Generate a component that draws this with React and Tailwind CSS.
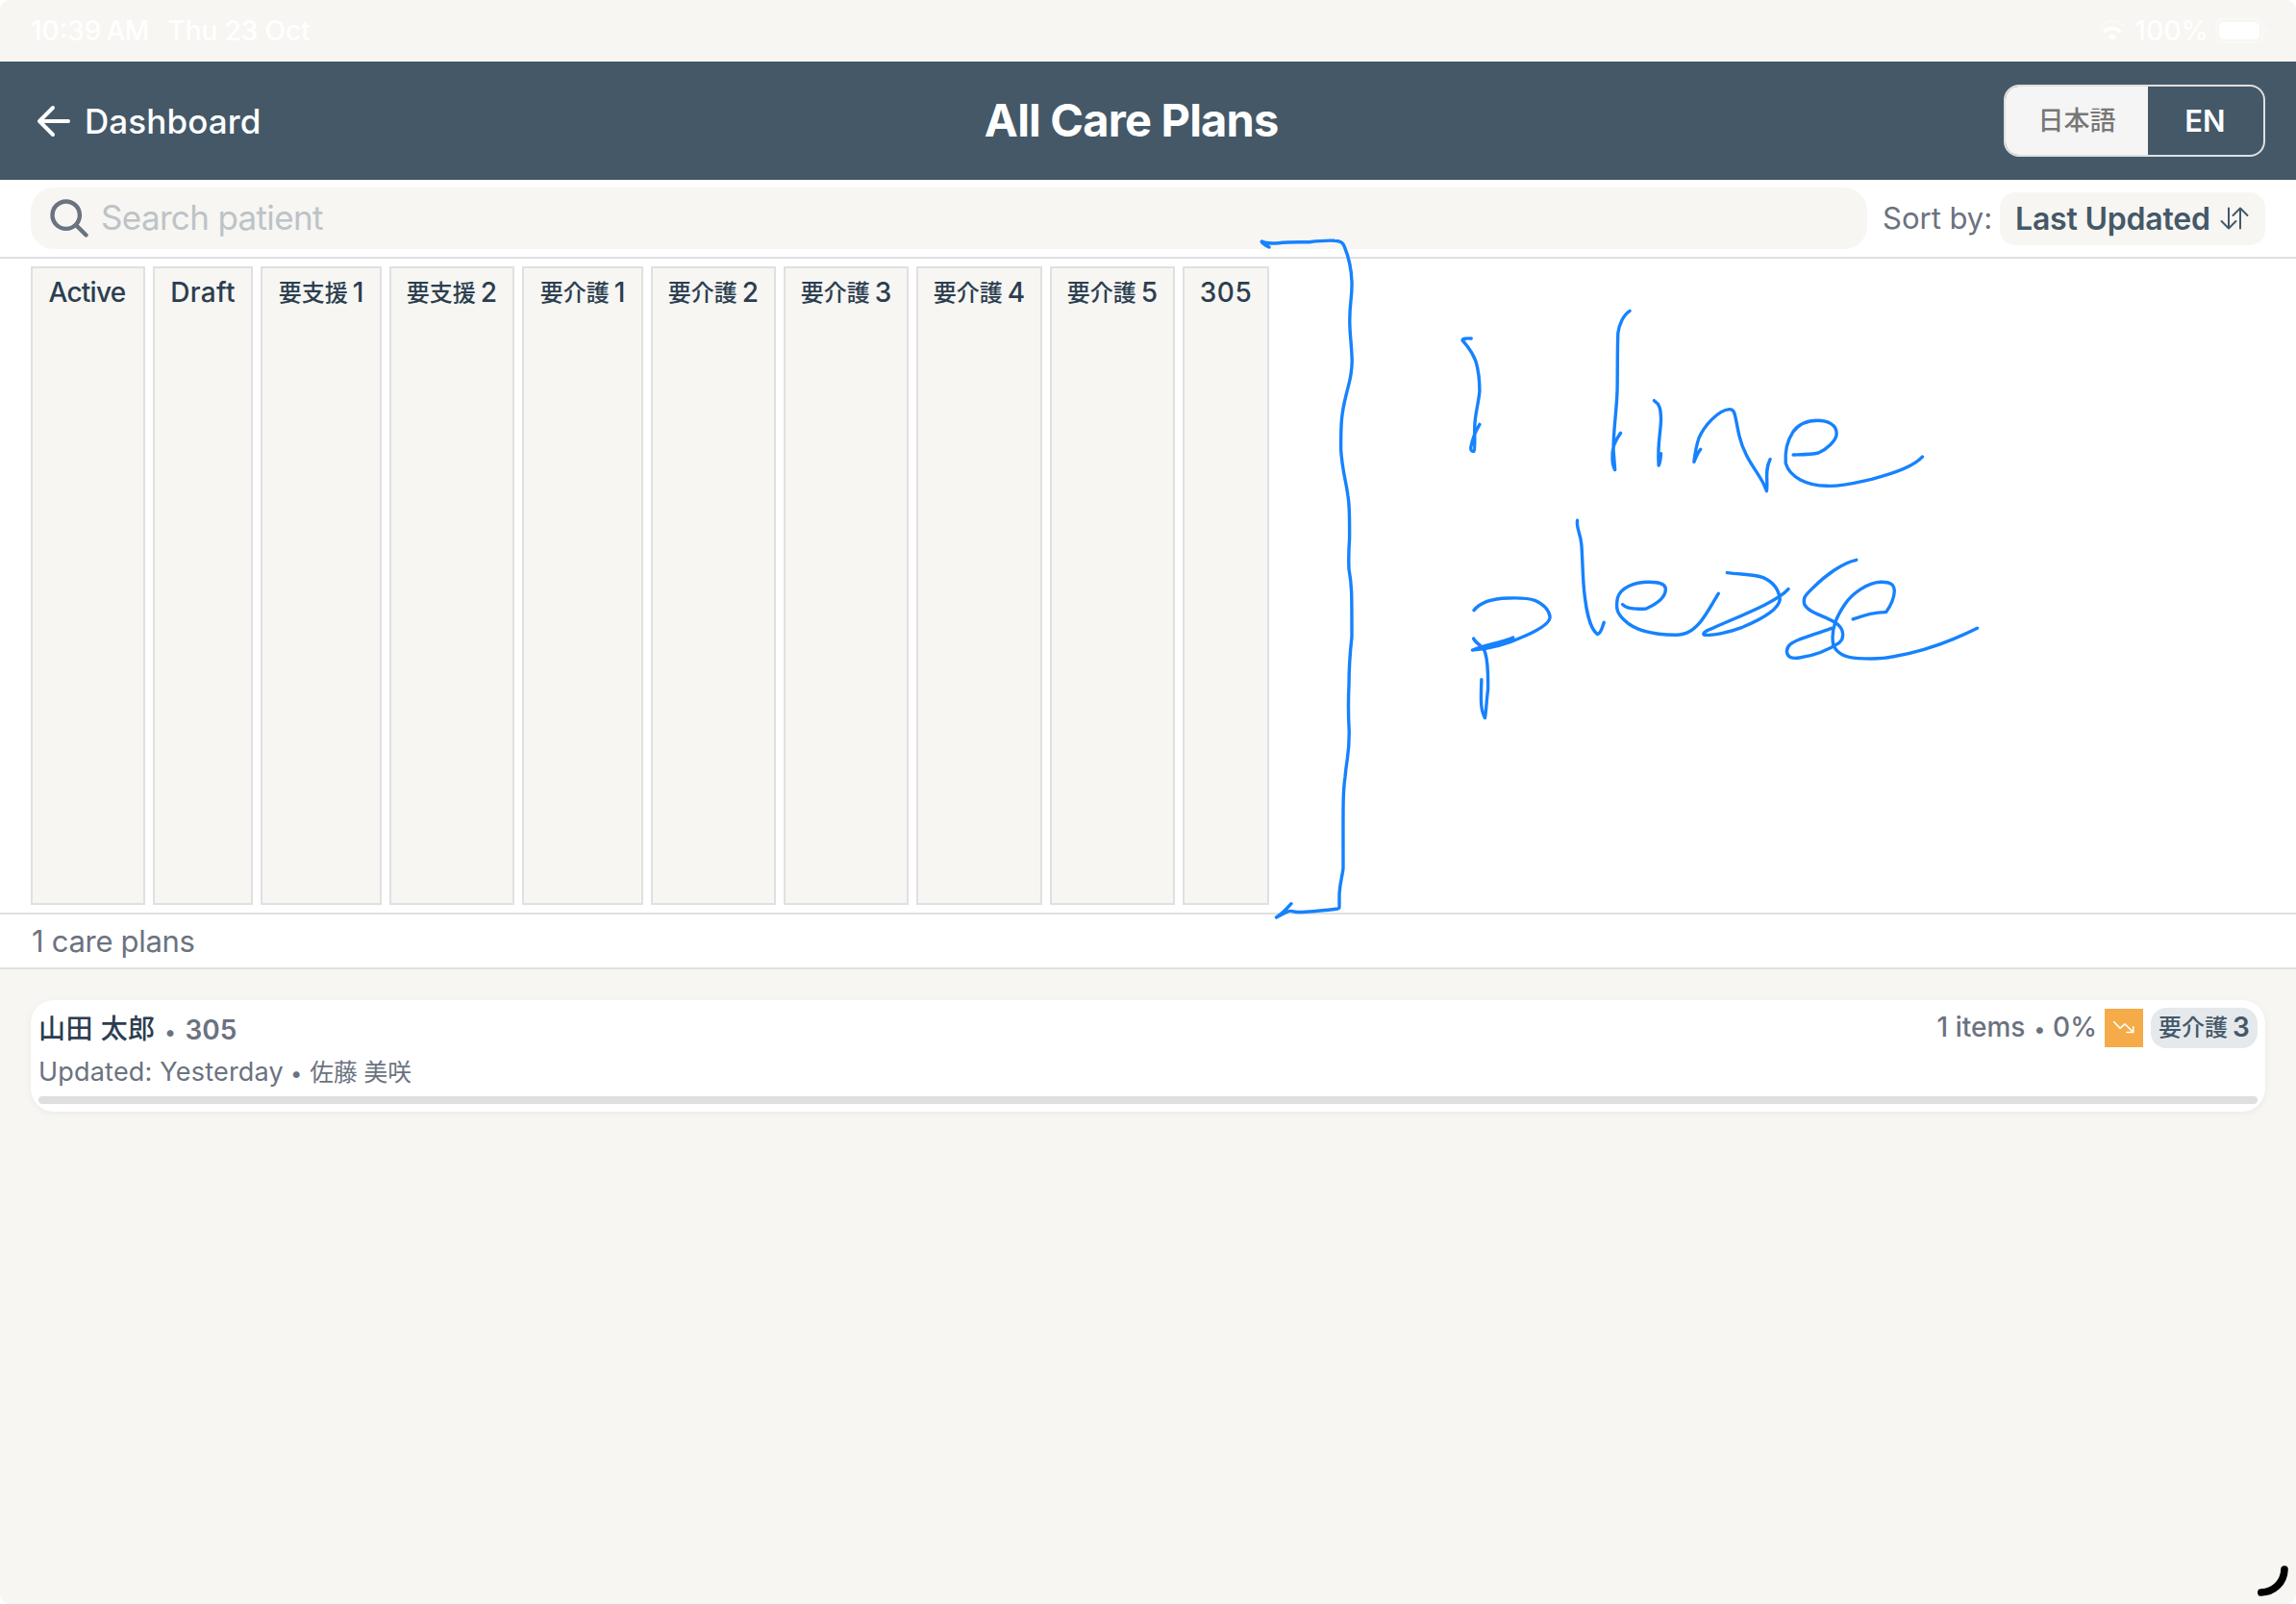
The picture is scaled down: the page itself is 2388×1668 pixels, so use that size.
const filters = [
  { label: "Active", className: "w-[119px]", text: "-ml-[2px] tracking-[-0.75px]" },
  { label: "Draft", className: "w-[104px]", text: "tracking-[0.35px]" },
  { level: "要支援", digit: "1", className: "w-[126px]" },
  { level: "要支援", digit: "2", className: "w-[130px]" },
  { level: "要介護", digit: "1", className: "w-[126px]" },
  { level: "要介護", digit: "2", className: "w-[130px]" },
  { level: "要介護", digit: "3", className: "w-[130px]" },
  { level: "要介護", digit: "4", className: "w-[131px]" },
  { level: "要介護", digit: "5", className: "w-[130px]" },
  { label: "305", className: "w-[90px]", text: "tracking-[0.5px]" },
];

function CareLevel({ level, digit }) {
  return (
    <span className="inline-flex items-baseline whitespace-nowrap">
      <span className="relative -top-px text-[24px] font-medium">{level}</span>
      <span className="ml-[5px]">{digit}</span>
    </span>
  );
}

function StatusBar() {
  return (
    <div className="flex h-16 shrink-0 items-center justify-between bg-[#f7f6f2] pr-[29px] pl-8 text-[28px] leading-8 font-medium text-white">
      <div className="flex">
        <span>10:39</span>
        <span className="ml-[5px] tracking-[-0.6px]">AM</span>
        <span className="ml-[20px] tracking-[-0.1px]">Thu 23 Oct</span>
      </div>
      <div className="flex items-center">
        <svg className="h-[22px] w-7" viewBox="0 0 28 22" fill="none">
          <path d="M1 6.5C8.500-.5 19.500-.5 27 6.500" stroke="white" strokeOpacity="0.35" strokeWidth="3" />
          <path d="M5.500 12C10.500 7.200 17.500 7.200 22.500 12" stroke="white" strokeWidth="3.600" />
          <path d="M14 21l-4.300-4.300c2.500-2.200 6.100-2.200 8.600 0z" fill="white" />
        </svg>
        <span className="ml-[9px] tracking-[0.3px]">100%</span>
        <svg className="ml-[7px] h-[26px] w-[55px]" viewBox="0 0 55 26" fill="none">
          <rect x="1" y="1" width="48" height="24" rx="7.500" stroke="white" strokeOpacity="0.4" strokeWidth="2" />
          <rect x="4" y="4" width="42" height="18" rx="5" fill="white" />
          <path d="M52 9c3 1 3 7 0 8z" fill="white" fillOpacity="0.45" />
        </svg>
      </div>
    </div>
  );
}

function Header() {
  return (
    <header className="flex h-[123px] shrink-0 items-center justify-between bg-[#445868] pr-8 pl-[38px] text-white">
      <div className="flex items-center">
        <svg className="h-[34px] w-9" viewBox="0 0 36 34" fill="none" stroke="white" strokeWidth="4" strokeLinecap="round" strokeLinejoin="round">
          <path d="M17 3L3 17l14 14M4 17h29" />
        </svg>
        <span className="ml-[14px] text-[35px] leading-10 font-medium tracking-[0.1px]">Dashboard</span>
      </div>
      <h1 className="-mt-px mr-[2px] text-[47px] leading-[56px] font-bold tracking-[-0.8px]">All Care Plans</h1>
      <div className="flex h-[75px] w-[272px] overflow-hidden rounded-[16px] border-2 border-[#e0e0e0] text-[31px] leading-[71px] font-semibold">
        <div className="w-[148px] bg-[#f5f5f5] text-center text-[27px] font-medium text-[#777777]">日本語</div>
        <div className="flex-1 pr-px text-center">EN</div>
      </div>
    </header>
  );
}

function Toolbar() {
  return (
    <div className="flex h-[82px] shrink-0 items-center border-b-2 border-[#e0e0e0] bg-white px-8">
      <div className="flex h-16 w-[1910px] items-center rounded-[24px] bg-[#f7f6f2] pl-5">
        <svg className="h-10 w-10" viewBox="0 0 40 40" fill="none" stroke="#6b7280" strokeLinecap="round">
          <circle cx="16.700" cy="16.700" r="14.200" strokeWidth="4.400" />
          <path d="M27.500 27.500L37.500 37.500" strokeWidth="4.400" />
        </svg>
        <span className="-mt-[2px] ml-[13px] text-[35px] leading-10 tracking-[-0.65px] text-[#bdc3c7]">Search patient</span>
      </div>
      <span className="ml-4 text-[31px] leading-9 text-[#6b7280]">Sort by:</span>
      <div className="ml-auto flex h-[55px] w-[276px] items-center rounded-[16px] bg-[#f7f6f2] pl-4 text-[#445868]">
        <span className="mt-px text-[32px] leading-9 font-semibold tracking-[-0.2px]">Last Updated</span>
        <svg className="ml-[9px] h-7 w-8" viewBox="0 0 32 28" fill="none" stroke="#445868" strokeWidth="2" strokeLinecap="round" strokeLinejoin="round">
          <path d="M10 3.500v21M2.500 17l7.500 7.500 7.500-7.500M22 24.500v-21M14.500 11L22 3.500l7.500 7.500" />
        </svg>
      </div>
    </div>
  );
}

function FilterColumns() {
  return (
    <div className="flex h-[682px] shrink-0 gap-2 border-b-2 border-[#e0e0e0] bg-white px-8 py-2">
      {filters.map((f, i) => (
        <div key={i} className={`shrink-0 border-2 border-[#e0e0e0] bg-[#f7f6f2] pt-[9px] text-center text-[28px] leading-8 font-medium text-[#2c3e50] ${f.className}`}>
          {f.label ? <span className={f.text}>{f.label}</span> : <CareLevel level={f.level} digit={f.digit} />}
        </div>
      ))}
    </div>
  );
}

function PlanCard() {
  return (
    <article className="mx-8 mt-8 h-[116px] shrink-0 rounded-[24px] bg-white px-2 pt-2 shadow-[0_2px_8px_rgba(0,0,0,0.05)]">
      <div className="flex h-[92px] justify-between text-[#6b7280]">
        <div className="pt-[6px]">
          <div className="flex h-[34px] items-baseline text-[28px] leading-[34px] font-semibold whitespace-pre">
            <span className="relative -top-px font-medium tracking-[0.4px] text-[#2c3e50]">山田 太郎</span>
            <span className="ml-[10px] text-[22px]">•</span>
            <span className="ml-[10px]">305</span>
          </div>
          <div className="mt-[10px] flex h-8 items-baseline text-[27px] leading-[34px] whitespace-pre">
            <span className="tracking-[0.2px]">Updated: Yesterday</span>
            <span className="ml-[7px] text-[22px]">•</span>
            <span className="ml-[8px] text-[24.700px]">佐藤 美咲</span>
          </div>
        </div>
        <div className="flex h-[42px] items-center text-[28px] leading-8 font-medium">
          <span className="flex items-baseline">
            <span>1 items</span>
            <span className="ml-[9px] text-[22px]">•</span>
            <span className="ml-[8px]">0%</span>
          </span>
          <span className="ml-2 flex size-10 items-center justify-center bg-[#f4ab48]">
            <svg className="size-6" viewBox="0 0 24 24" fill="none" stroke="white" strokeWidth="1.600" strokeLinecap="round" strokeLinejoin="round">
              <path d="M1.500 5.500L8 12.300l5-4.500 8.500 8.500M21.700 10.800v5.700H15" />
            </svg>
          </span>
          <span className="ml-2 flex h-[42px] w-[111px] items-center justify-center rounded-[16px] bg-[#e5e9ec] font-semibold text-[#445868]">
            <CareLevel level="要介護" digit="3" />
          </span>
        </div>
      </div>
      <div className="h-2 rounded-[4px] bg-[#dfdfdf]" />
    </article>
  );
}

function Annotations() {
  return (
    <div className="pointer-events-none absolute inset-0 text-[#1682fe]">
      <svg className="size-full" viewBox="0 0 2388 1668" fill="none" stroke="currentColor" strokeWidth="3.400" strokeLinecap="round" strokeLinejoin="round">
        <path d="M1320 257C1315 255 1311 251 1312.500 251C1314 252 1320 253.500 1330 252.700C1342 251.500 1350 252 1361.600 251.700C1372 250.500 1380 249.800 1388 250.300C1395 250.500 1397 253 1398.500 257C1403 268 1405.500 280 1406 293C1406.500 310 1403.500 315 1403.800 335C1404 350 1406 360 1406.200 376C1406 392 1403 398 1400 411C1395 431 1394.600 440 1394.600 467C1396 490 1400 500 1402 516C1404 528 1403.600 540 1403.600 560C1402.500 575 1402.500 580 1403 592C1406 608 1406 615 1406 662C1404 680 1403 690 1403 712C1402 733 1402.300 745 1403.200 760C1403.500 785 1401 785 1399 808C1396.500 825 1397 840 1397 903C1396 912 1393.500 918 1393 930V943Q1393 945 1390 945.300C1375 947 1358 949 1350 948.500C1342 948 1343 945.500 1337 949L1327.500 954C1332 951 1335 949 1343 939.700" />
        {/* Handwritten note, drawn on a horizontally compressed grid */}
        <g transform="translate(1480 300) scale(0.3954 0.3333)" className="[&>path]:[vector-effect:non-scaling-stroke]">
          <path d="M127 156C112 155 103 157 104 162C120 183 130 199 139 227C147 259 149 290 149 320C146 360 137 390 136 430C135 460 138 505 134 508C128 508 125 505 126 495C130 470 138 445 149 424" />
          <path d="M544 70C528 82 516 110 513 139C511 190 512 260 511 320C508 400 500 450 501 505L505 566C497 550 496 515 502 490C508 470 512 465 520 451" />
          <path d="M608 350C622 361 625 372 626 405C626 450 616 480 620 552C623 547 625 530 626 515" />
          <path d="M730 502C722 512 718 528 713 541C715 520 719 490 726 466C740 428 776 380 806 377C823 376 820 400 832 460C846 530 880 570 897 612L904 632C908 595 898 570 913 533" />
          <path d="M974 519C1000 518 1020 518 1040 513C1060 503 1088 475 1088 452C1088 425 1065 412 1038 412C1005 412 985 428 973 448C958 475 952 510 954 545C965 590 1010 615 1062 616C1110 618 1140 605 1180 595C1240 577 1290 557 1314 525" />
          <path d="M134 1004C150 980 185 967 224 966C252 965 274 964 294 973C318 986 332 1003 334 1025C334 1046 300 1067 270 1083C225 1108 175 1125 130 1128C165 1112 205 1105 237 1089" />
          <path d="M133 1092C140 1110 160 1115 164 1138C172 1170 171 1200 171 1250C167 1285 167 1310 163 1340C151 1315 152 1285 154 1220" />
          <path d="M406 724C403 750 415 765 417 800C420 850 420 900 424 945C429 1000 437 1060 459 1079C469 1076 472 1055 476 1042" />
          <path d="M525 986C535 999 555 1002 587 999C610 987 636 968 638 942C640 922 622 916 594 916C555 916 520 933 512 965C506 1000 512 1015 530 1035C555 1065 600 1080 665 1081C695 1081 712 1065 730 1040C750 1010 762 980 777 952" />
          <path d="M800 887C840 893 870 891 895 902C922 916 936 940 939 970C936 1000 895 1030 840 1057C800 1075 760 1083 740 1081C733 1077 745 1067 762 1060C820 1028 930 980 961 938" />
          <path d="M1140 847C1105 855 1060 893 1025 935C1003 960 1000 965 1003 985C1015 1015 1060 1020 1091 1048C1107 1065 1109 1090 1095 1105C1070 1125 1030 1145 990 1152C970 1156 958 1150 957 1133C957 1115 967 1106 990 1095C1020 1082 1050 1071 1074 1060" />
          <path d="M1131 1032C1165 1017 1190 1009 1218 1010C1230 990 1239 970 1240 945C1240 922 1228 915 1203 916C1170 918 1130 950 1110 985C1090 1020 1072 1060 1079 1110C1085 1132 1105 1151 1145 1154C1180 1156 1215 1155 1235 1149C1320 1132 1390 1100 1458 1060" />
        </g>
      </svg>
    </div>
  );
}

export default function App() {
  return (
    <div className="h-[1668px] w-[2388px] bg-white">
      <main className="relative flex size-full flex-col overflow-hidden rounded-[10px] bg-[#f7f6f2] font-[Inter,'Noto_Sans_CJK_JP',sans-serif]" lang="ja">
        <StatusBar />
        <Header />
        <Toolbar />
        <FilterColumns />
        <div className="h-[57px] shrink-0 border-b-2 border-[#e0e0e0] bg-white px-[33px] text-[31px] leading-[55px] tracking-[-0.3px] text-[#6b7280]">
          1 care plans
        </div>
        <PlanCard />
        <Annotations />
        <svg className="absolute right-0 bottom-0 size-20" viewBox="0 0 80 80" fill="none" stroke="black" strokeWidth="7.600" strokeLinecap="round">
          <path d="M68 44C67.500 58 57 67.500 43.800 68" />
        </svg>
      </main>
    </div>
  );
}
